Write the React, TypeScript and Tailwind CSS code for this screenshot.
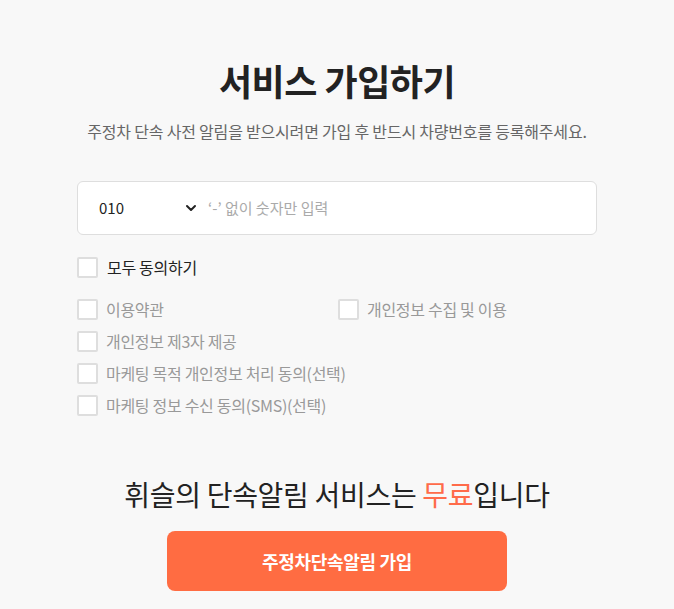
import { ChevronDown } from "lucide-react"

const terms = [
  ["이용약관", "개인정보 수집 및 이용"],
  ["개인정보 제3자 제공"],
  ["마케팅 목적 개인정보 처리 동의(선택)"],
  ["마케팅 정보 수신 동의(SMS)(선택)"],
]

function Box() {
  return <span className="h-[21px] w-[21px] shrink-0 rounded-[2px] border-2 border-[#dedede] bg-white" />
}

export default function App() {
  return (
    <div
      className="min-h-[609px] bg-[#f8f8f8] text-[#222]"
      style={{ fontFamily: '"Noto Sans CJK KR", "Noto Sans", sans-serif' }}
    >
      <div className="mx-auto w-[520px] pt-[54px]">
        <h1 className="text-center text-[36px] font-bold leading-[52px] tracking-[-0.5px]">서비스 가입하기</h1>
        <p className="mt-[13px] text-center text-[16px] leading-[24px] tracking-[-0.2px] text-[#666]">
          주정차 단속 사전 알림을 받으시려면 가입 후 반드시 차량번호를 등록해주세요.
        </p>

        <div className="mt-[38px] flex h-[54px] items-center rounded-[6px] border border-[#dedede] bg-white px-[21px]">
          <div className="flex w-[100px] items-center justify-between text-[15px] text-[#222]">
            <span>010</span>
            <ChevronDown className="h-4 w-4" strokeWidth={3} />
          </div>
          <span className="ml-[9px] text-[15px] text-[#aaa]">‘-’ 없이 숫자만 입력</span>
        </div>

        <label className="mt-[20px] flex items-center gap-[9px]">
          <Box />
          <span className="text-[16px] tracking-[-0.3px] text-[#222]">모두 동의하기</span>
        </label>

        <div className="mt-[20px] flex flex-col gap-[11px]">
          {terms.map((row, i) => (
            <div key={i} className="flex">
              {row.map((t, j) => (
                <label key={j} className="flex min-w-[261px] items-center gap-[8px] whitespace-nowrap">
                  <Box />
                  <span className="text-[16px] leading-[21px] tracking-[-0.3px] text-[#999]">{t}</span>
                </label>
              ))}
            </div>
          ))}
        </div>

        <p className="mt-[58px] text-center text-[28px] leading-[40px] tracking-[-0.3px] text-[#222]">
          휘슬의 단속알림 서비스는 <span className="text-[#ff6b4a]">무료</span>입니다
        </p>

        <button className="mx-auto mt-[17px] flex h-[60px] w-[340px] items-center justify-center rounded-[8px] bg-[#ff6c42] text-[18px] font-bold tracking-[-0.3px] text-white">
          주정차단속알림 가입
        </button>
      </div>
    </div>
  )
}
